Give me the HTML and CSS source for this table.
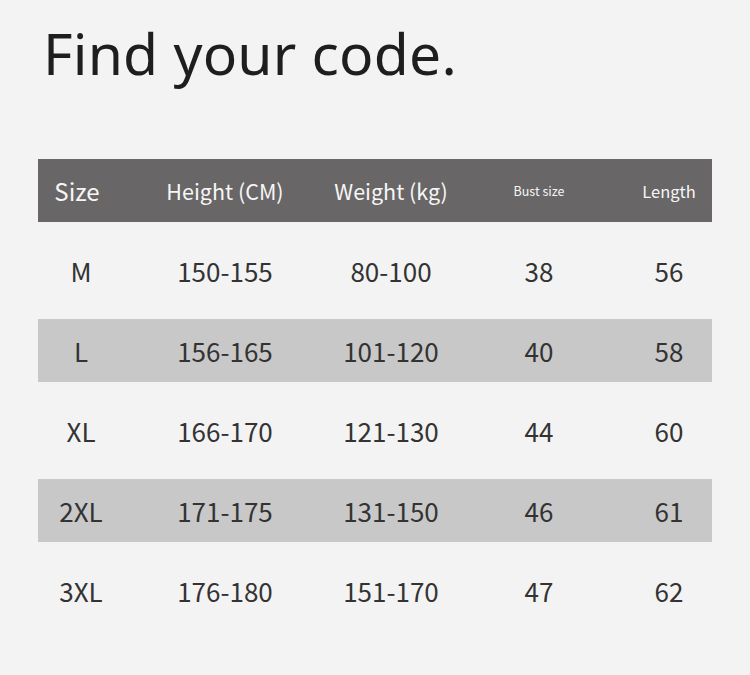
FILE: index.html
```html
<!DOCTYPE html>
<html>
<head>
<meta charset="utf-8">
<link rel="stylesheet" href="styles.css">
</head>
<body>
<div class="page">
  <h1 class="title">Find your code.</h1>
  <div class="table">
    <div class="row head">
      <div class="cell h-size">Size</div>
      <div class="cell h-mid">Height (CM)</div>
      <div class="cell h-mid">Weight (kg)</div>
      <div class="cell h-small">Bust size</div>
      <div class="cell h-len">Length</div>
    </div>
    <div class="row tall">
      <div class="cell">M</div><div class="cell">150-155</div><div class="cell">80-100</div><div class="cell">38</div><div class="cell">56</div>
    </div>
    <div class="row band">
      <div class="cell">L</div><div class="cell">156-165</div><div class="cell">101-120</div><div class="cell">40</div><div class="cell">58</div>
    </div>
    <div class="row tall">
      <div class="cell">XL</div><div class="cell">166-170</div><div class="cell">121-130</div><div class="cell">44</div><div class="cell">60</div>
    </div>
    <div class="row band">
      <div class="cell">2XL</div><div class="cell">171-175</div><div class="cell">131-150</div><div class="cell">46</div><div class="cell">61</div>
    </div>
    <div class="row tall">
      <div class="cell">3XL</div><div class="cell">176-180</div><div class="cell">151-170</div><div class="cell">47</div><div class="cell">62</div>
    </div>
  </div>
</div>
</body>
</html>
```
FILE: styles.css
```css
html, body {
  margin: 0;
  padding: 0;
  background: #f3f3f3;
}
.page {
  width: 750px;
  height: 675px;
  padding: 0 38px;
  box-sizing: border-box;
  overflow: hidden;
}
.title {
  margin: 0;
  padding: 17px 0 0 5px;
  height: 159px;
  box-sizing: border-box;
  font-family: "Noto Sans", sans-serif;
  font-weight: 400;
  font-size: 57px;
  line-height: 72px;
  color: #1e1e1e;
  letter-spacing: 0.2px;
}
.table {
  width: 674px;
}
.row {
  display: grid;
  grid-template-columns: 86px 202px 130px 166px 90px;
  align-items: center;
  font-family: "Noto Sans CJK SC", "Noto Sans", sans-serif;
  color: #333333;
  font-size: 26px;
}
.cell {
  text-align: center;
}
.cell:last-child {
  padding-left: 4px;
}
.head {
  height: 63px;
  background: #686666;
  color: #f6f6f6;
}
.tall {
  height: 97px;
}
.band {
  height: 63px;
  background: #c8c8c8;
}
.h-size {
  font-size: 24px;
  padding-right: 8px;
}
.h-mid {
  font-size: 21.5px;
}
.h-small {
  font-size: 12.5px;
}
.h-len {
  font-size: 16.5px;
}
```
